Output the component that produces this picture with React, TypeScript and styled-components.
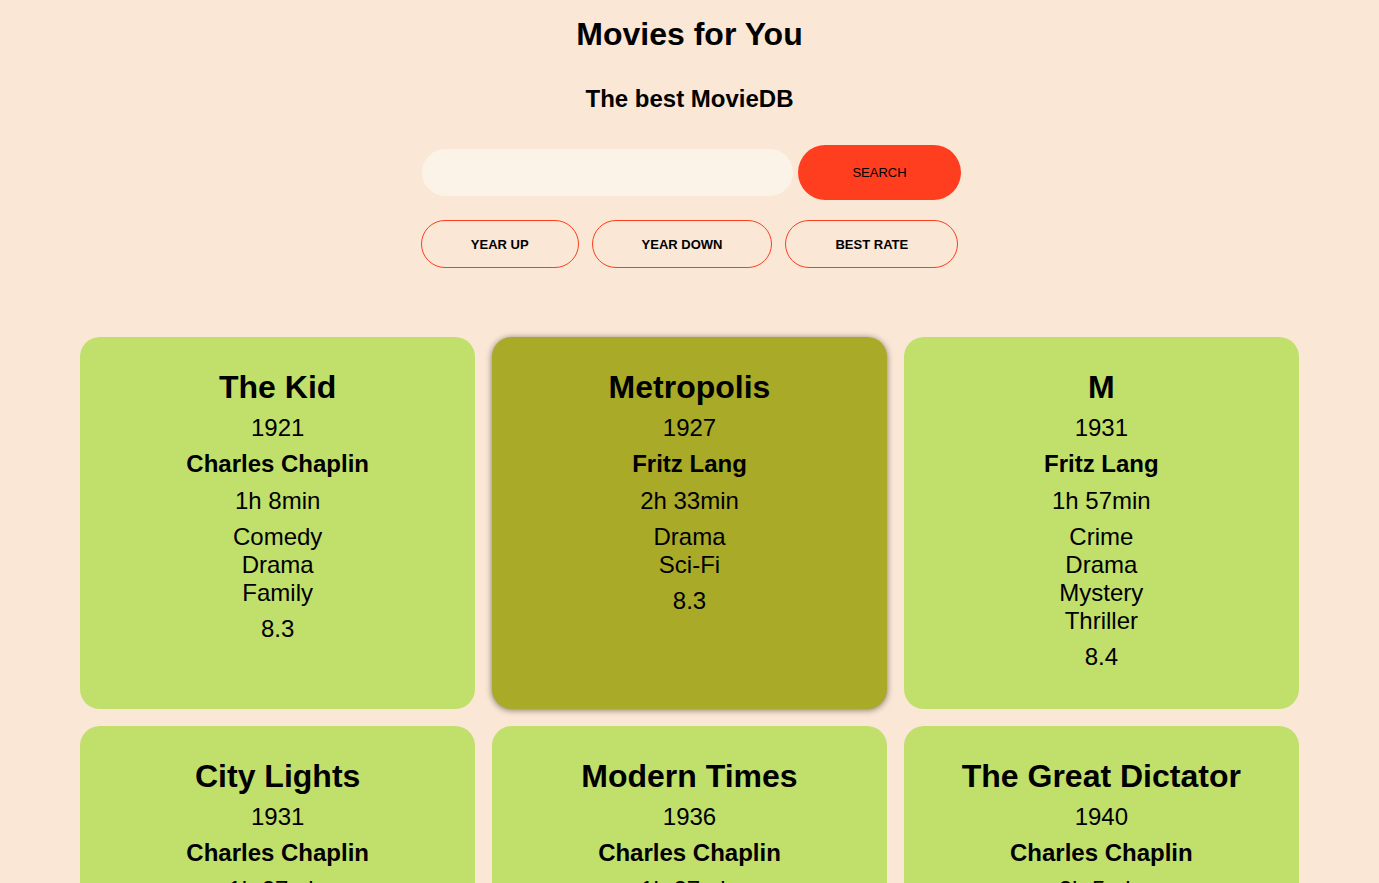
import React from "react";
import styled, { createGlobalStyle } from "styled-components";

interface Movie {
  id: number;
  title: string;
  year: number;
  director: string;
  runtime: string;
  genres: string[];
  rating: string;
}

const movies: Movie[] = [
  { id: 1, title: "The Kid", year: 1921, director: "Charles Chaplin", runtime: "1h 8min", genres: ["Comedy", "Drama", "Family"], rating: "8.3" },
  { id: 2, title: "Metropolis", year: 1927, director: "Fritz Lang", runtime: "2h 33min", genres: ["Drama", "Sci-Fi"], rating: "8.3" },
  { id: 3, title: "M", year: 1931, director: "Fritz Lang", runtime: "1h 57min", genres: ["Crime", "Drama", "Mystery", "Thriller"], rating: "8.4" },
  { id: 4, title: "City Lights", year: 1931, director: "Charles Chaplin", runtime: "1h 27min", genres: ["Comedy", "Drama", "Romance"], rating: "8.5" },
  { id: 5, title: "Modern Times", year: 1936, director: "Charles Chaplin", runtime: "1h 27min", genres: ["Comedy", "Drama", "Romance"], rating: "8.5" },
  { id: 6, title: "The Great Dictator", year: 1940, director: "Charles Chaplin", runtime: "2h 5min", genres: ["Comedy", "Drama", "War"], rating: "8.4" },
];

const sorts = ["YEAR UP", "YEAR DOWN", "BEST RATE"];

const App: React.FC = () => {
  return (
    <>
      <GlobalStyle />
      <Page>
        <Header>
          <Title>Movies for You</Title>
          <Subtitle>The best MovieDB</Subtitle>
          <SearchRow>
            <SearchInput type="text" />
            <SearchButton>SEARCH</SearchButton>
          </SearchRow>
          <SortRow>
            {sorts.map((s) => (
              <SortButton key={s}>{s}</SortButton>
            ))}
          </SortRow>
        </Header>
        <Grid>
          {movies.map((m) => (
            <Card key={m.id} active={m.id === 2}>
              <CardTitle>{m.title}</CardTitle>
              <Line>{m.year}</Line>
              <Director>{m.director}</Director>
              <Line>{m.runtime}</Line>
              <Genres>
                {m.genres.map((g) => (
                  <Line key={g}>{g}</Line>
                ))}
              </Genres>
              <Line>{m.rating}</Line>
            </Card>
          ))}
        </Grid>
      </Page>
    </>
  );
};

export default App;

const GlobalStyle = createGlobalStyle`
  html, body {
    margin: 0;
    padding: 0;
    background: #fae7d5;
    font-family: "Liberation Sans", Arial, sans-serif;
    color: #000;
  }
  ::-webkit-scrollbar {
    display: none;
  }
`;

const Page = styled.div`
  min-height: 100vh;
  padding-bottom: 40px;
`;

const Header = styled.header`
  display: flex;
  flex-direction: column;
  align-items: center;
`;

const Title = styled.h1`
  font-size: 32px;
  font-weight: 700;
  margin: 16px 0 0;
`;

const Subtitle = styled.h2`
  font-size: 24px;
  font-weight: 700;
  margin: 32px 0 0;
`;

const SearchRow = styled.div`
  display: flex;
  align-items: center;
  gap: 5px;
  margin-top: 32px;
  margin-left: 4px;
`;

const SearchInput = styled.input`
  width: 371px;
  height: 47px;
  box-sizing: border-box;
  border: none;
  border-radius: 24px;
  background: #fcf3e8;
  padding: 0 20px;
  font-size: 16px;
  outline: none;
`;

const SearchButton = styled.button`
  height: 55px;
  width: 163px;
  border: none;
  border-radius: 28px;
  background: #ff3d1f;
  color: #000;
  font-family: "Liberation Sans", Arial, sans-serif;
  font-size: 13px;
  cursor: pointer;
`;

const SortRow = styled.div`
  display: flex;
  gap: 13px;
  margin-top: 20px;
`;

const SortButton = styled.button`
  height: 48px;
  padding: 0 49px;
  border: 1px solid #ff3d1f;
  border-radius: 24px;
  background: transparent;
  color: #000;
  font-family: "Liberation Sans", Arial, sans-serif;
  font-size: 13px;
  font-weight: 700;
  cursor: pointer;
`;

const Grid = styled.main`
  display: grid;
  grid-template-columns: repeat(3, 1fr);
  gap: 17px 16.5px;
  padding: 0 80px;
  margin-top: 69px;
`;

const Card = styled.div<{ active?: boolean }>`
  display: flex;
  flex-direction: column;
  align-items: center;
  gap: 8.2px;
  padding: 32px 20px 38px;
  border-radius: 20px;
  background: ${(p) => (p.active ? "#a9aa28" : "#c0df6b")};
  box-shadow: ${(p) => (p.active ? "0 1px 6px rgba(0, 0, 0, 0.5)" : "none")};
  text-align: center;
`;

const CardTitle = styled.h3`
  margin: 0;
  font-size: 32px;
  font-weight: 700;
`;

const Line = styled.div`
  font-size: 24px;
`;

const Director = styled(Line)`
  font-weight: 700;
`;

const Genres = styled.div`
  display: flex;
  flex-direction: column;
`;
